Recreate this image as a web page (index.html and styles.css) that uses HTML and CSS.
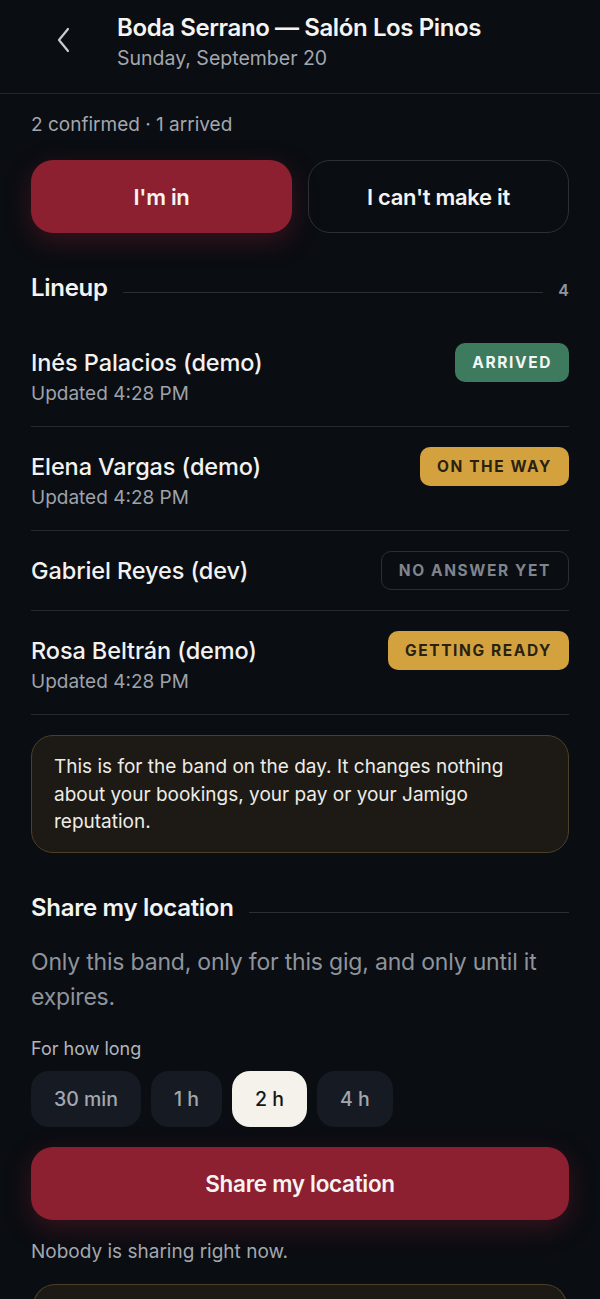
FILE: index.html
```html
<!DOCTYPE html>
<html lang="en">
<head>
<meta charset="UTF-8" />
<meta name="viewport" content="width=device-width, initial-scale=1" />
<title>Boda Serrano — Salón Los Pinos</title>
<link rel="stylesheet" href="styles.css">
</head>
<body>
<header class="topbar">
  <button class="back" aria-label="Back">
    <svg width="18" height="26" viewBox="0 0 18 26" fill="none" stroke="#c9ccd2" stroke-width="2.2" stroke-linecap="round" stroke-linejoin="round"><path d="M13 2 L4 13 L13 24"/></svg>
  </button>
  <div class="titles">
    <h1>Boda Serrano — Salón Los Pinos</h1>
    <div class="date">Sunday, September 20</div>
  </div>
</header>

<main class="page">
  <p class="summary">2 confirmed · 1 arrived</p>

  <div class="rsvp">
    <button class="btn btn-primary">I'm in</button>
    <button class="btn btn-outline">I can't make it</button>
  </div>

  <div class="section-head">
    <h2>Lineup</h2>
    <span class="rule"></span>
    <span class="count">4</span>
  </div>

  <ul class="lineup">
    <li class="member">
      <div>
        <div class="name">Inés Palacios (demo)</div>
        <div class="updated">Updated 4:28 PM</div>
      </div>
      <span class="badge badge-arrived">Arrived</span>
    </li>
    <li class="member">
      <div>
        <div class="name">Elena Vargas (demo)</div>
        <div class="updated">Updated 4:28 PM</div>
      </div>
      <span class="badge badge-gold">On the way</span>
    </li>
    <li class="member">
      <div>
        <div class="name">Gabriel Reyes (dev)</div>
      </div>
      <span class="badge badge-none">No answer yet</span>
    </li>
    <li class="member">
      <div>
        <div class="name">Rosa Beltrán (demo)</div>
        <div class="updated">Updated 4:28 PM</div>
      </div>
      <span class="badge badge-gold">Getting ready</span>
    </li>
  </ul>

  <div class="note">
    This is for the band on the day. It changes nothing about your bookings, your pay or your Jamigo reputation.
  </div>

  <div class="section-head share-head">
    <h2>Share my location</h2>
    <span class="rule"></span>
  </div>

  <p class="lead">Only this band, only for this gig, and only until it expires.</p>

  <div class="label">For how long</div>
  <div class="chips">
    <button class="chip">30 min</button>
    <button class="chip">1 h</button>
    <button class="chip active">2 h</button>
    <button class="chip">4 h</button>
  </div>

  <button class="btn btn-primary btn-wide">Share my location</button>

  <p class="status">Nobody is sharing right now.</p>

  <div class="note note-bottom"></div>
</main>
</body>
</html>
```

FILE: styles.css
```css
* {
  margin: 0; padding: 0; box-sizing: border-box;
  font-family: 'Inter', 'Liberation Sans', sans-serif;
}
html, body {
  background: #0a0d12;
  color: #f2f2f0;
  overflow: hidden;
  height: 1299px;
}
button {
  font-family: inherit;
  border: none;
  background: none;
  color: inherit;
  cursor: pointer;
}

.topbar {
  height: 94px;
  display: flex;
  align-items: flex-start;
  padding: 14px 0 0 52px;
  border-bottom: 1px solid #22262d;
}
.back {
  width: 24px;
  height: 26px;
  margin-top: 13px;
  margin-right: 41px;
  display: flex;
  align-items: center;
  justify-content: center;
}
.titles h1 {
  font-size: 24px;
  font-weight: 600;
  letter-spacing: -0.4px;
  line-height: 28px;
  color: #f4f4f2;
}
.titles .date {
  margin-top: 3px;
  font-size: 19.5px;
  line-height: 26px;
  color: #a3a7ae;
}

.page {
  padding: 0 31px;
}
.summary {
  margin-top: 19px;
  font-size: 19px;
  line-height: 24px;
  color: #a3a7ae;
}

.rsvp {
  margin-top: 23px;
  display: grid;
  grid-template-columns: 1fr 1fr;
  gap: 16px;
}
.btn {
  height: 73px;
  border-radius: 22px;
  font-size: 22px;
  font-weight: 600;
  letter-spacing: -0.3px;
  color: #f6f4f2;
}
.btn-primary {
  background: #8c2030;
  box-shadow: 0 8px 26px rgba(140, 32, 48, 0.35);
}
.btn-outline {
  border: 1.5px solid #2b2f37;
}

.section-head {
  margin-top: 41px;
  display: flex;
  align-items: center;
  gap: 15px;
}
.section-head h2 {
  font-size: 24px;
  font-weight: 600;
  letter-spacing: -0.3px;
  line-height: 28px;
  color: #f4f4f2;
}
.section-head .rule {
  flex: 1;
  height: 1px;
  background: #2a2e35;
  margin-top: 9px;
}
.section-head .count {
  font-size: 16px;
  font-weight: 600;
  color: #9095a0;
  margin-top: 4px;
}

.lineup {
  list-style: none;
  margin-top: 21px;
}
.member {
  display: flex;
  justify-content: space-between;
  align-items: flex-start;
  padding: 20px 0;
  border-bottom: 1px solid #242830;
}
.member .name {
  font-size: 23.5px;
  font-weight: 500;
  letter-spacing: -0.1px;
  line-height: 39px;
  color: #f2f2f0;
}
.member .updated {
  font-size: 19px;
  line-height: 24px;
  color: #9ea2aa;
}
.badge {
  height: 39px;
  padding: 0 17px;
  display: flex;
  align-items: center;
  border-radius: 10px;
  font-size: 15.5px;
  font-weight: 700;
  letter-spacing: 1.6px;
  text-transform: uppercase;
}
.badge-arrived {
  background: #3d7a5e;
  color: #f3f6f4;
}
.badge-gold {
  background: #d3a23f;
  color: #2b2110;
}
.badge-none {
  border: 1.5px solid #2a2e35;
  color: #7f848d;
}

.note {
  margin-top: 20px;
  padding: 17px 22px 16px;
  border-radius: 22px;
  background: #1d1a15;
  border: 1.5px solid #4b4027;
  font-size: 19px;
  line-height: 27.5px;
  color: #eeece6;
}

.share-head {
  margin-top: 41px;
}
.lead {
  margin-top: 23px;
  font-size: 23px;
  letter-spacing: -0.2px;
  line-height: 35px;
  color: #8f949c;
}
.label {
  margin-top: 22px;
  font-size: 18px;
  line-height: 24px;
  color: #b2b5bb;
}
.chips {
  margin-top: 10px;
  display: flex;
  gap: 10px;
}
.chip {
  height: 56px;
  padding: 0 23px;
  border-radius: 18px;
  background: #161b23;
  font-size: 19.5px;
  font-weight: 500;
  color: #a3a7ae;
}
.chip.active {
  background: #f4f2ea;
  color: #14161a;
}
.btn-wide {
  display: block;
  width: 100%;
  margin-top: 20px;
  font-size: 22.5px;
}
.status {
  margin-top: 20px;
  font-size: 19px;
  line-height: 24px;
  color: #a3a7ae;
}
.note-bottom {
  margin: 20px 2px 0;
  height: 15px;
  border-bottom: none;
  border-radius: 22px 22px 0 0;
}
```
